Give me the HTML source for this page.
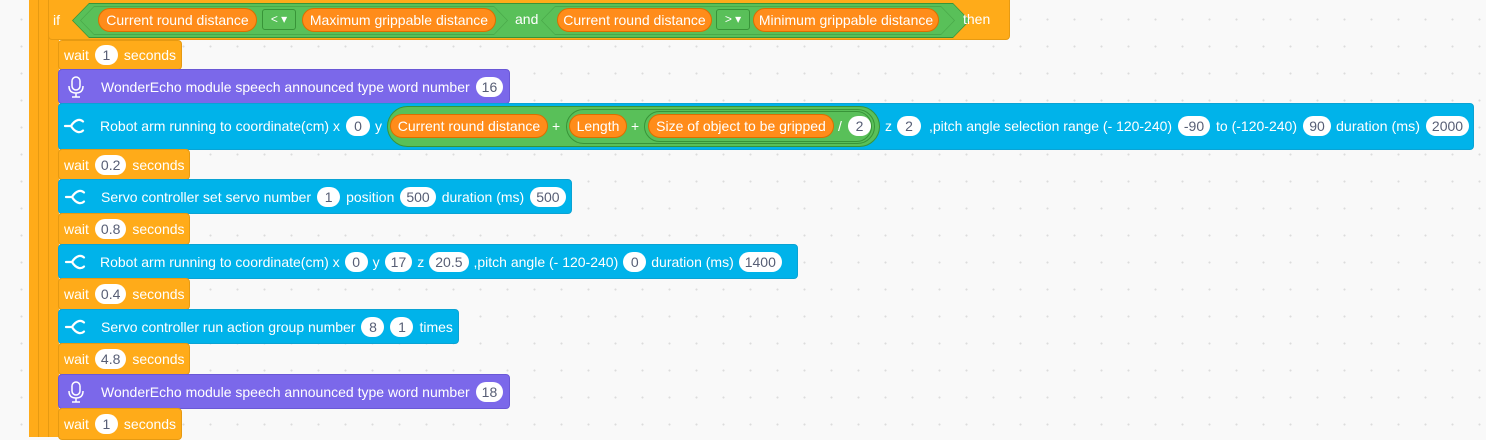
<!DOCTYPE html>
<html><head><meta charset="utf-8"><style>
*{margin:0;padding:0;box-sizing:border-box}
body{width:1486px;height:437px;overflow:hidden;position:relative;background:#f9f9f9;background-image:radial-gradient(circle,#dcdcdc 0.8px,transparent 1.2px);background-size:27px 27px;background-position:8px 6px;font-family:"Liberation Sans",sans-serif;font-size:14px;color:#fff}
.a{position:absolute;white-space:nowrap}
.blk{position:absolute;left:58px;display:flex;align-items:center;gap:6px;padding-left:5px;border-radius:4px;white-space:nowrap}
.o{background:#ffab19;border:1px solid #e69a12}
.c{background:#00b3ea;border:1px solid #0aa3d4;padding-left:4px}
.pu{background:#7b68ea;border:1px solid #6a58d6;padding-left:4px}
.p{display:inline-block;background:#fff;color:#575e75;border-radius:10px;height:20px;line-height:20px;padding:0 6px;text-align:center;min-width:23px}
.r{display:inline-block;background:#ff8c1a;border:1px solid #db6e00;border-radius:12px;height:24px;line-height:22px;padding:0 8px;color:#fff;text-align:center}
.ic{width:26px;height:22px;margin-right:6px}
.dd{position:absolute;height:21px;width:34px;border:1px solid #389438;background:#59c059;border-radius:3px;line-height:19px;text-align:center;font-size:12px}
.gr{position:absolute;background:#59c059;border:1px solid #389438}
</style></head><body>
<div class="a" style="left:29px;top:0;width:30px;height:437px;background:#ffab19"></div>
<div class="a" style="left:38px;top:0;width:1px;height:437px;background:#e69a12"></div>
<div class="a" style="left:48px;top:0;width:1px;height:437px;background:#e69a12"></div>
<!-- if row -->
<div class="a" style="left:48px;top:-4px;width:962px;height:44px;background:#ffab19;border:1px solid #e69a12;border-radius:4px"></div>
<div class="a" style="left:53px;top:12px">if</div>
<div class="a" style="left:72px;top:3px;width:898px;height:35px;background:#389438;clip-path:polygon(17px 0,881px 0,100% 50%,881px 100%,17px 100%,0 50%)"></div>
<div class="a" style="left:73px;top:4px;width:896px;height:33px;background:#59c059;clip-path:polygon(16px 0,880px 0,100% 50%,880px 100%,16px 100%,0 50%)"></div>
<div class="a" style="left:80px;top:6px;width:428px;height:29px;background:#4aa94a;clip-path:polygon(14px 0,414px 0,100% 50%,414px 100%,14px 100%,0 50%)"></div>
<div class="a" style="left:81px;top:7px;width:426px;height:27px;background:#59c059;clip-path:polygon(13px 0,413px 0,100% 50%,413px 100%,13px 100%,0 50%)"></div>
<div class="a" style="left:541px;top:6px;width:414px;height:29px;background:#4aa94a;clip-path:polygon(14px 0,400px 0,100% 50%,400px 100%,14px 100%,0 50%)"></div>
<div class="a" style="left:542px;top:7px;width:412px;height:27px;background:#59c059;clip-path:polygon(13px 0,399px 0,100% 50%,399px 100%,13px 100%,0 50%)"></div>
<span class="a r" style="left:98px;top:8px;width:159px;padding:0">Current round distance</span>
<span class="dd" style="left:262px;top:9px">&lt; ▾</span>
<span class="a r" style="left:302px;top:8px;width:194px;padding:0">Maximum grippable distance</span>
<div class="a" style="left:515px;top:11px">and</div>
<span class="a r" style="left:557px;top:8px;width:155px;padding:0">Current round distance</span>
<span class="dd" style="left:716px;top:9px">&gt; ▾</span>
<span class="a r" style="left:753px;top:8px;width:186px;padding:0">Minimum grippable distance</span>
<div class="a" style="left:963px;top:11px">then</div>

<svg width="0" height="0" style="position:absolute"><defs>
<symbol id="claw" viewBox="0 0 26 22"><path d="M3 11 H9 M9 11 Q12 6 16 5 Q19 4.5 21 6.5 M9 11 Q12 16 16 17 Q19 17.5 21 15.5" fill="none" stroke="#fff" stroke-width="2.2" stroke-linecap="round" stroke-linejoin="round"/></symbol>
<symbol id="mic" viewBox="0 0 26 22"><rect x="9" y="1" width="8" height="13" rx="4" fill="none" stroke="#fff" stroke-width="1.5"/><path d="M6 10 Q6 17 13 17 Q20 17 20 10 M13 17 V21 M9 21 H17" fill="none" stroke="#fff" stroke-width="1.5"/></symbol>
</defs></svg>

<div class="blk o" style="top:40px;height:30px;width:124px">wait <span class="p">1</span> seconds</div>
<div class="blk pu" style="top:69px;height:35px;width:452px"><svg class="ic"><use href="#mic"/></svg>WonderEcho module speech announced type word number <span class="p">16</span></div>

<!-- long cyan row -->
<div class="a c" style="left:58px;top:103px;width:1416px;height:47px;border-radius:4px"></div>
<svg class="a" style="left:62px;top:115px" width="26" height="22"><use href="#claw"/></svg>
<svg class="a" style="left:0;top:103px" width="1486" height="47" font-family="Liberation Sans, sans-serif" font-size="14" fill="#fff">
<text x="100" y="28" textLength="240" lengthAdjust="spacingAndGlyphs">Robot arm running to coordinate(cm) x</text>
<text x="375" y="28">y</text>
<text x="885" y="28">z</text>
<text x="929" y="28" textLength="243" lengthAdjust="spacingAndGlyphs">,pitch angle selection range (- 120-240)</text>
<text x="1216" y="28" textLength="81" lengthAdjust="spacingAndGlyphs">to (-120-240)</text>
<text x="1336" y="28" textLength="84" lengthAdjust="spacingAndGlyphs">duration (ms)</text>
</svg>
<span class="a p" style="left:346px;top:116px;width:24px;min-width:0;padding:0">0</span>
<div class="gr" style="left:387px;top:106px;width:493px;height:41px;border-radius:21px"></div>
<div class="gr" style="left:566px;top:109px;width:309px;height:35px;border-radius:18px"></div>
<div class="gr" style="left:644px;top:111px;width:228px;height:31px;border-radius:16px"></div>
<span class="a r" style="left:390px;top:114px;width:158px;padding:0">Current round distance</span>
<div class="a" style="left:552px;top:118px">+</div>
<span class="a r" style="left:569px;top:114px;width:58px;padding:0">Length</span>
<div class="a" style="left:631px;top:118px">+</div>
<span class="a r" style="left:648px;top:114px;width:186px;padding:0">Size of object to be gripped</span>
<div class="a" style="left:838px;top:118px">/</div>
<span class="a p" style="left:848px;top:116px;width:23px;min-width:0;padding:0">2</span>
<span class="a p" style="left:897px;top:116px;width:24px;min-width:0;padding:0">2</span>
<span class="a p" style="left:1178px;top:116px;width:32px;min-width:0;padding:0">-90</span>
<span class="a p" style="left:1303px;top:116px;width:28px;min-width:0;padding:0">90</span>
<span class="a p" style="left:1426px;top:116px;width:43px;min-width:0;padding:0">2000</span>

<div class="blk o" style="top:149px;height:31px;width:132px">wait <span class="p">0.2</span> seconds</div>
<div class="blk c" style="top:179px;height:35px;width:514px"><svg class="ic"><use href="#claw"/></svg>Servo controller set servo number <span class="p">1</span> position <span class="p">500</span> duration (ms) <span class="p">500</span></div>
<div class="blk o" style="top:213px;height:32px;width:132px">wait <span class="p">0.8</span> seconds</div>
<div class="blk c" style="top:244px;height:35px;width:740px;gap:5px"><svg class="ic"><use href="#claw"/></svg>Robot arm running to coordinate(cm) x <span class="p">0</span> y <span class="p">17</span> z <span class="p">20.5</span> ,pitch angle (- 120-240) <span class="p">0</span> duration (ms) <span class="p">1400</span></div>
<div class="blk o" style="top:278px;height:32px;width:132px">wait <span class="p">0.4</span> seconds</div>
<div class="blk c" style="top:309px;height:35px;width:401px"><svg class="ic"><use href="#claw"/></svg>Servo controller run action group number <span class="p">8</span> <span class="p">1</span> times</div>
<div class="blk o" style="top:343px;height:32px;width:132px">wait <span class="p">4.8</span> seconds</div>
<div class="blk pu" style="top:374px;height:35px;width:452px"><svg class="ic"><use href="#mic"/></svg>WonderEcho module speech announced type word number <span class="p">18</span></div>
<div class="blk o" style="top:408px;height:32px;width:124px">wait <span class="p">1</span> seconds</div>
</body></html>
